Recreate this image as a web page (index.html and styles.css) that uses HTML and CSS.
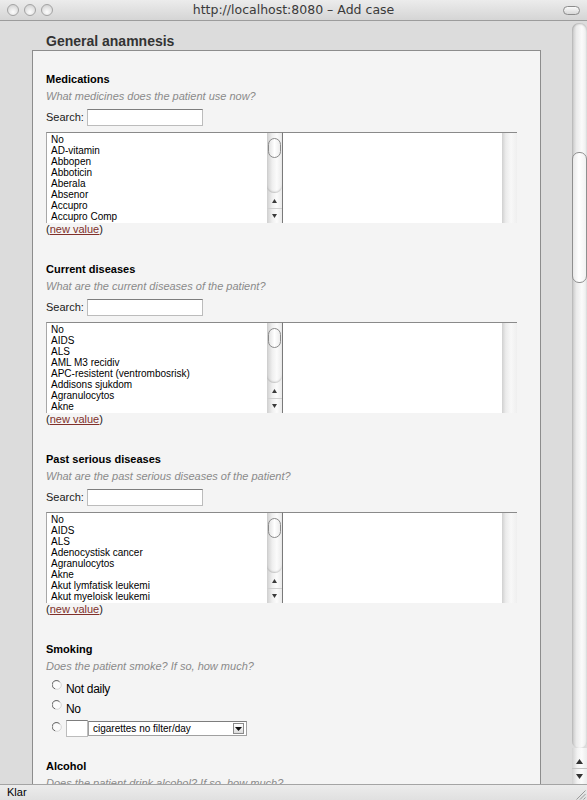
FILE: index.html
```html
<!DOCTYPE html>
<html>
<head>
<meta charset="utf-8">
<title>Add case</title>
<link rel="stylesheet" href="styles.css">
</head>
<body>
<div class="titlebar">
  <div class="lights"><span class="light"></span><span class="light"></span><span class="light"></span></div>
  <div class="title">http://localhost:8080 – Add case</div>
  <div class="tb-right"><span class="pill"></span></div>
</div>
<div class="main">
  <div class="viewport">
    <h2 class="heading">General anamnesis</h2>
    <div class="panel">
      <div class="section">
        <div class="field-title">Medications</div>
        <div class="question">What medicines does the patient use now?</div>
        <div class="search"><span>Search:</span><span class="textbox"></span></div>
        <div class="picker">
          <div class="listbox">
            <div class="options">
              <div>No</div><div>AD-vitamin</div><div>Abbopen</div><div>Abboticin</div><div>Aberala</div><div>Absenor</div><div>Accupro</div><div>Accupro Comp</div>
            </div>
            <div class="lscroll">
              <div class="ltrack"><div class="lthumb"></div></div>
              <div class="lbtn"><svg width="5" height="4" viewBox="0 0 5 4"><polygon points="0,4 2.5,0 5,4" fill="#3a3a3a"/></svg></div>
              <div class="lbtn lbtn-down"><svg width="5" height="4" viewBox="0 0 5 4"><polygon points="0,0 5,0 2.5,4" fill="#3a3a3a"/></svg></div>
            </div>
          </div>
          <div class="chosen"><div class="fill"></div><div class="ctrack"></div></div>
        </div>
        <div class="newvalue">(<a href="#">new value</a>)</div>
      </div>

      <div class="section">
        <div class="field-title">Current diseases</div>
        <div class="question">What are the current diseases of the patient?</div>
        <div class="search"><span>Search:</span><span class="textbox"></span></div>
        <div class="picker">
          <div class="listbox">
            <div class="options">
              <div>No</div><div>AIDS</div><div>ALS</div><div>AML M3 recidiv</div><div>APC-resistent (ventrombosrisk)</div><div>Addisons sjukdom</div><div>Agranulocytos</div><div>Akne</div>
            </div>
            <div class="lscroll">
              <div class="ltrack"><div class="lthumb"></div></div>
              <div class="lbtn"><svg width="5" height="4" viewBox="0 0 5 4"><polygon points="0,4 2.5,0 5,4" fill="#3a3a3a"/></svg></div>
              <div class="lbtn lbtn-down"><svg width="5" height="4" viewBox="0 0 5 4"><polygon points="0,0 5,0 2.5,4" fill="#3a3a3a"/></svg></div>
            </div>
          </div>
          <div class="chosen"><div class="fill"></div><div class="ctrack"></div></div>
        </div>
        <div class="newvalue">(<a href="#">new value</a>)</div>
      </div>

      <div class="section">
        <div class="field-title">Past serious diseases</div>
        <div class="question">What are the past serious diseases of the patient?</div>
        <div class="search"><span>Search:</span><span class="textbox"></span></div>
        <div class="picker">
          <div class="listbox">
            <div class="options">
              <div>No</div><div>AIDS</div><div>ALS</div><div>Adenocystisk cancer</div><div>Agranulocytos</div><div>Akne</div><div>Akut lymfatisk leukemi</div><div>Akut myeloisk leukemi</div>
            </div>
            <div class="lscroll">
              <div class="ltrack"><div class="lthumb"></div></div>
              <div class="lbtn"><svg width="5" height="4" viewBox="0 0 5 4"><polygon points="0,4 2.5,0 5,4" fill="#3a3a3a"/></svg></div>
              <div class="lbtn lbtn-down"><svg width="5" height="4" viewBox="0 0 5 4"><polygon points="0,0 5,0 2.5,4" fill="#3a3a3a"/></svg></div>
            </div>
          </div>
          <div class="chosen"><div class="fill"></div><div class="ctrack"></div></div>
        </div>
        <div class="newvalue">(<a href="#">new value</a>)</div>
      </div>

      <div class="section section-smoking">
        <div class="field-title">Smoking</div>
        <div class="question">Does the patient smoke? If so, how much?</div>
        <div class="radios">
          <div class="radio-row">
            <svg class="radio" width="10" height="10" viewBox="0 0 10 10"><circle cx="5" cy="5" r="4.3" fill="#fbfbfb" stroke="#d2d2d2" stroke-width="0.9"/><path d="M7.6 1.9 A4.3 4.3 0 1 0 3.2 8.9" fill="none" stroke="#6a6a6a" stroke-width="1"/></svg>
            <span>Not daily</span>
          </div>
          <div class="radio-row">
            <svg class="radio" width="10" height="10" viewBox="0 0 10 10"><circle cx="5" cy="5" r="4.3" fill="#fbfbfb" stroke="#d2d2d2" stroke-width="0.9"/><path d="M7.6 1.9 A4.3 4.3 0 1 0 3.2 8.9" fill="none" stroke="#6a6a6a" stroke-width="1"/></svg>
            <span>No</span>
          </div>
          <div class="radio-row radio-row-qty">
            <svg class="radio radio-low" width="10" height="10" viewBox="0 0 10 10"><circle cx="5" cy="5" r="4.3" fill="#fbfbfb" stroke="#d2d2d2" stroke-width="0.9"/><path d="M7.6 1.9 A4.3 4.3 0 1 0 3.2 8.9" fill="none" stroke="#6a6a6a" stroke-width="1"/></svg>
            <span class="qty"></span>
            <span class="dropdown"><span class="dd-text">cigarettes no filter/day</span><span class="dd-btn"><svg width="7" height="4" viewBox="0 0 7 4"><polygon points="0,0 7,0 3.5,4" fill="#111"/></svg></span></span>
          </div>
        </div>
      </div>

      <div class="section">
        <div class="field-title">Alcohol</div>
        <div class="question">Does the patient drink alcohol? If so, how much?</div>
      </div>
    </div>
  </div>
  <div class="vscroll">
    <div class="vtrack"><div class="vthumb"></div></div>
    <div class="vbtn vbtn-up"><svg width="7" height="5" viewBox="0 0 7 5"><polygon points="0,5 3.5,0 7,5" fill="#333"/></svg></div>
    <div class="vbtn vbtn-down"><svg width="7" height="5" viewBox="0 0 7 5"><polygon points="0,0 7,0 3.5,5" fill="#333"/></svg></div>
  </div>
</div>
<div class="statusbar">
  <span class="status-text">Klar</span>
  <svg class="grip" width="12" height="12" viewBox="0 0 12 12"><path d="M11.5 2.5 L2.5 11.5 M11.5 6 L6 11.5 M11.5 9.5 L9.5 11.5" stroke="#9a9a9a" stroke-width="1" fill="none"/></svg>
</div>
</body>
</html>
```

FILE: styles.css
```css
* { box-sizing: border-box; }

html, body {
  margin: 0;
  padding: 0;
}

body {
  width: 587px;
  height: 800px;
  overflow: hidden;
  display: flex;
  flex-direction: column;
  background: #dcdcdc;
  font-family: "Liberation Sans", Arial, sans-serif;
  color: #000;
}

/* ---------- window title bar ---------- */
.titlebar {
  flex: none;
  height: 21px;
  display: grid;
  grid-template-columns: 1fr auto 1fr;
  align-items: center;
  padding: 0 7px;
  background: linear-gradient(#ececec, #d5d5d5);
  border-bottom: 1px solid #9c9c9c;
}

.lights {
  display: flex;
  gap: 5px;
}

.light {
  width: 12px;
  height: 12px;
  border-radius: 50%;
  border: 1px solid #a3a3a3;
  background: radial-gradient(circle at 50% 70%, #fdfdfd 0%, #e2e2e2 55%, #c8c8c8 100%);
}

.title {
  font-family: "DejaVu Sans", sans-serif;
  font-size: 12.5px;
  color: #3a3a3a;
  line-height: 20px;
  white-space: nowrap;
}

.tb-right {
  display: flex;
  justify-content: flex-end;
}

.pill {
  width: 17px;
  height: 9px;
  border-radius: 5px;
  border: 1px solid #8c8c8c;
  background: linear-gradient(#fafafa, #d8d8d8);
}

/* ---------- main area ---------- */
.main {
  flex: 1;
  min-height: 0;
  display: flex;
}

.viewport {
  flex: 1;
  overflow: hidden;
  padding: 0 31px 0 32px;
}

.heading {
  margin: 0;
  padding: 12px 0 0 14px;
  font-size: 14px;
  line-height: 17px;
  font-weight: bold;
  color: #333;
}

.panel {
  border: 1px solid #8d8d8d;
  background: #f4f4f4;
  padding: 22px 13px 40px 13px;
}

.section {
  margin-bottom: 27px;
}

.section-smoking {
  margin-bottom: 21px;
}

.field-title {
  font-size: 11px;
  line-height: 13px;
  font-weight: bold;
  color: #000;
}

.question {
  margin-top: 4px;
  font-size: 11px;
  line-height: 13px;
  font-style: italic;
  color: #8a8a8a;
}

.search {
  margin-top: 6px;
  height: 17px;
  display: flex;
  align-items: center;
  font-size: 11px;
  line-height: 13px;
  color: #1a1a1a;
}

.textbox {
  width: 116px;
  height: 17px;
  margin-left: 3px;
  background: #fff;
  border: 1px solid #bcbcbc;
  border-top-color: #7d7d7d;
}

/* ---------- double list picker ---------- */
.picker {
  margin-top: 6px;
  height: 91px;
  display: flex;
}

.listbox {
  width: 236px;
  display: flex;
  background: #fff;
  border-top: 1px solid #8a8a8a;
  border-left: 1px solid #a8a8a8;
}

.options {
  flex: 1;
  overflow: hidden;
  padding: 1px 0 0 4px;
  font-size: 10px;
  line-height: 11px;
  color: #000;
  white-space: nowrap;
}

.lscroll {
  width: 15px;
  display: flex;
  flex-direction: column;
  background: linear-gradient(to right, #cfcfcf, #efefef 35%, #fbfbfb 65%, #ebebeb);
}

.ltrack {
  height: 60px;
  padding-top: 5px;
  border-radius: 0 0 7px 7px;
  box-shadow: inset 0 -2px 2px -1px rgba(0, 0, 0, 0.22);
}

.lthumb {
  height: 20px;
  margin: 0 1px;
  border: 1px solid #8a8a8a;
  border-radius: 7px;
  background: linear-gradient(to right, #e3e3e3, #ffffff 50%, #ececec);
}

.lbtn {
  height: 15px;
  display: flex;
  align-items: center;
  justify-content: center;
}

.lbtn-down {
  border-top: 1px solid #d0d0d0;
}

.chosen {
  width: 235px;
  display: flex;
  background: #fff;
  border-top: 1px solid #8a8a8a;
  border-left: 1px solid #7a7a7a;
}

.chosen .fill {
  flex: 1;
}

.ctrack {
  width: 15px;
  background: linear-gradient(to right, #d0d0d0, #ebebeb 25%, #f8f8f8 60%, #efefef);
}

.newvalue {
  font-size: 11px;
  line-height: 13px;
  color: #222;
}

.newvalue a {
  color: #80302a;
  text-decoration: underline;
}

/* ---------- radios ---------- */
.radios {
  margin-top: 6px;
}

.radio-row {
  height: 20px;
  display: flex;
  align-items: flex-start;
  padding-left: 6px;
  font-size: 12px;
  line-height: 20px;
  color: #000;
  letter-spacing: -0.3px;
}

.radio {
  flex: none;
  margin-top: 1px;
  margin-right: 4px;
}

.radio-low {
  margin-top: 3px;
}

.qty {
  width: 22px;
  height: 17px;
  margin-top: 1px;
  background: #fff;
  border: 1px solid #bcbcbc;
  border-top-color: #7d7d7d;
}

.dropdown {
  width: 159px;
  height: 15px;
  margin-top: 2px;
  display: flex;
  align-items: center;
  background: #fff;
  border: 1px solid #a0a0a0;
  border-top-color: #7d7d7d;
  padding-left: 4px;
  font-size: 10px;
  line-height: 12px;
  letter-spacing: 0;
}

.dd-text {
  flex: 1;
}

.dd-btn {
  width: 11px;
  height: 11px;
  margin-right: 2px;
  display: flex;
  align-items: center;
  justify-content: center;
  border: 1px solid #8a8a8a;
  background: linear-gradient(#ffffff, #dcdcdc);
}

/* ---------- page scrollbar ---------- */
.vscroll {
  width: 15px;
  flex: none;
  display: flex;
  flex-direction: column;
  background: #dcdcdc;
}

.vtrack {
  flex: 1;
  margin-top: 2px;
  padding-top: 129px;
  border-radius: 7px 7px 7px 7px;
  background: linear-gradient(to right, #c6c6c6, #ebebeb 30%, #fafafa 65%, #ececec);
  box-shadow: inset 0 1px 2px rgba(0, 0, 0, 0.25);
}

.vthumb {
  height: 131px;
  border: 1px solid #8f8f8f;
  border-radius: 7px;
  background: linear-gradient(to right, #e9e9e9, #ffffff 45%, #f2f2f2);
}

.vbtn {
  display: flex;
  justify-content: center;
  align-items: center;
  background: linear-gradient(to right, #d2d2d2, #f2f2f2 35%, #fbfbfb 65%, #ececec);
}

.vbtn-up {
  height: 20px;
  padding-top: 7px;
}

.vbtn-down {
  height: 16px;
  border-top: 1px solid #c4c4c4;
}

/* ---------- status bar ---------- */
.statusbar {
  flex: none;
  height: 16px;
  display: flex;
  align-items: center;
  justify-content: space-between;
  padding-left: 7px;
  border-top: 1px solid #a4a4a4;
  background: linear-gradient(#ececec, #e0e0e0);
  font-size: 11px;
  line-height: 15px;
  color: #000;
}

.grip {
  align-self: flex-end;
  margin-right: 1px;
}
```
